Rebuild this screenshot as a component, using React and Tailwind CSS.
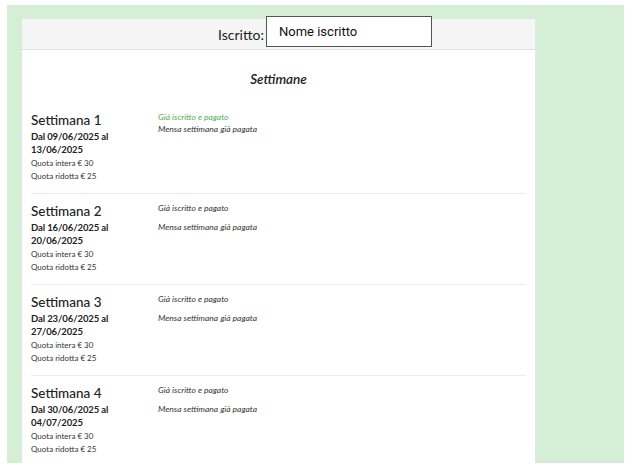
import React from 'react';

const weeks = [
  { n: 1, from: '09/06/2025', to: '13/06/2025', first: true },
  { n: 2, from: '16/06/2025', to: '20/06/2025' },
  { n: 3, from: '23/06/2025', to: '27/06/2025' },
  { n: 4, from: '30/06/2025', to: '04/07/2025' },
];

const WeekRow = ({ week }) => (
  <div className="flex border-b border-[#ececec] pt-[8px] pb-[10px]">
    <div className="w-[127px] shrink-0 text-[#222]">
      <div className="text-[13.5px] leading-[18px] font-medium">Settimana {week.n}</div>
      <div className="mt-[1px] text-[9.5px] leading-[13px] font-bold tracking-[-0.1px]">
        Dal {week.from} al
        <br />
        {week.to}
      </div>
      <div className="mt-[1px] text-[8px] leading-[13px] text-[#333]">
        <div>Quota intera € 30</div>
        <div>Quota ridotta € 25</div>
      </div>
    </div>
    <div className="italic text-[8.5px] leading-[12px]">
      {week.first ? (
        <>
          <div className="text-[#4caf50]">Già iscritto e pagato</div>
          <div className="text-[#333]">Mensa settimana già pagata</div>
        </>
      ) : (
        <>
          <div className="text-[#333]">Già iscritto e pagato</div>
          <div className="mt-[7px] text-[#333]">Mensa settimana già pagata</div>
        </>
      )}
    </div>
  </div>
);

export default function App() {
  return (
    <div className="w-[631px] h-[476px] bg-white pt-[5px] pl-[7px] font-['Lato',sans-serif]">
      <div className="w-[617px] h-[458px] bg-[#d5eed6] pt-[14px] pl-[15px]">
        <div className="relative w-[514px] h-[444px] bg-white border-r border-[#e6e6e6]">
          <div className="h-[31px] bg-[#f5f5f5] border-b border-[#e2e2e2] flex items-center pl-[196px] overflow-hidden">
            <span className="text-[14px] text-[#222] whitespace-nowrap">Iscritto:</span>
          </div>
          <div className="absolute left-[244px] top-[-3px] w-[166px] h-[31px] bg-white border border-[#555] flex items-center pl-[12px] font-['Roboto',sans-serif] text-[13px] text-[#111]">
            Nome iscritto
          </div>
          <div className="px-[9px] pt-[20px] h-[413px] overflow-hidden">
            <div className="text-center italic font-semibold text-[13.5px] leading-[18px] text-[#222]">Settimane</div>
            <div className="mt-[15px]">
              {weeks.map((w) => (
                <WeekRow key={w.n} week={w} />
              ))}
            </div>
          </div>
        </div>
      </div>
    </div>
  );
}
